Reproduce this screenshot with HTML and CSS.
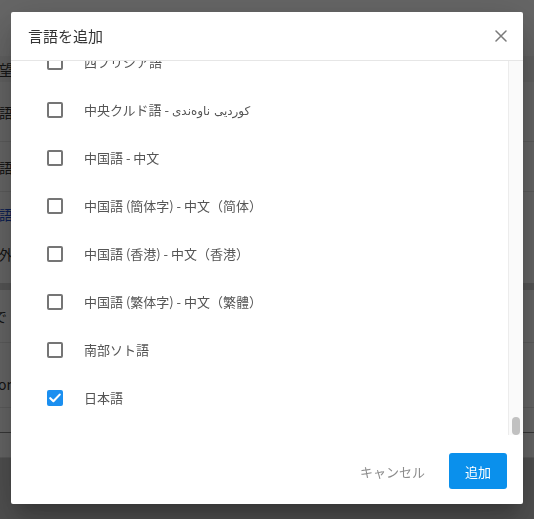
FILE: index.html
```html
<!DOCTYPE html>
<html lang="ja">
<head>
<meta charset="utf-8">
<title>言語を追加</title>
<link rel="stylesheet" href="styles.css">
</head>
<body>
<div class="page">
  <div class="pg-spacer"></div>
  <div class="pg-row pg-r1"><span class="pg-t">望</span></div>
  <div class="pg-row pg-r2 pg-line"><span class="pg-t">語</span></div>
  <div class="pg-row pg-r3 pg-line"><span class="pg-t">語</span></div>
  <div class="pg-row pg-r4"><span class="pg-t pg-link">語</span></div>
  <div class="pg-row pg-r5"><span class="pg-t">外</span></div>
  <div class="pg-gap"></div>
  <div class="pg-band"></div>
  <div class="pg-row pg-r6 pg-line"><span class="pg-t pg-cut">で</span></div>
  <div class="pg-row pg-r7 pg-line"><span class="pg-t pg-om">om</span></div>
  <div class="pg-r8"></div>
  <div class="pg-r9"></div>
  <div class="pg-foot"></div>
</div>

<div class="overlay">
  <div class="dialog">
    <div class="dlg-head">
      <span class="dlg-title">言語を追加</span>
      <svg class="dlg-close" width="12" height="12" viewBox="0 0 12 12"><path d="M1 1 L11 11 M11 1 L1 11" stroke="#7a7a7a" stroke-width="1.5" stroke-linecap="round" fill="none"/></svg>
    </div>
    <div class="dlg-body">
      <div class="list">
        <div class="list-inner">
          <div class="item"><span class="cb"></span><span class="label">西フリジア語</span></div>
          <div class="item"><span class="cb"></span><span class="label">中央クルド語 - <span class="ar">کوردیی ناوەندی</span></span></div>
          <div class="item"><span class="cb"></span><span class="label">中国語 - 中文</span></div>
          <div class="item"><span class="cb"></span><span class="label">中国語 (簡体字) - 中文（简体）</span></div>
          <div class="item"><span class="cb"></span><span class="label">中国語 (香港) - 中文（香港）</span></div>
          <div class="item"><span class="cb"></span><span class="label">中国語 (繁体字) - 中文（繁體）</span></div>
          <div class="item"><span class="cb"></span><span class="label">南部ソト語</span></div>
          <div class="item"><span class="cb cb-on"><svg width="12" height="10" viewBox="0 0 12 10"><path d="M1.3 5.2 L4.4 8.2 L10.7 1.6" stroke="#fff" stroke-width="2.1" fill="none" stroke-linecap="round" stroke-linejoin="round"/></svg></span><span class="label">日本語</span></div>
        </div>
      </div>
      <div class="track"><div class="thumb"></div></div>
    </div>
    <div class="dlg-foot">
      <button class="btn-cancel">キャンセル</button>
      <button class="btn-add">追加</button>
    </div>
  </div>
</div>
</body>
</html>
```

FILE: styles.css
```css
html, body {
  margin: 0;
  padding: 0;
}
body {
  width: 534px;
  height: 519px;
  overflow: hidden;
  font-family: "Noto Sans CJK JP", "DejaVu Sans", sans-serif;
  background: #fff;
}

/* underlying page */
.page {
  width: 534px;
  font-size: 13px;
  color: #333;
}
.pg-spacer { height: 56px; }
.pg-row {
  display: flex;
  align-items: center;
}
.pg-line { border-bottom: 1px solid #e6e6e6; box-sizing: border-box; }
.pg-t { margin-left: -1px; font-size: 14px; line-height: 16px; }
.pg-link { color: #1a4fd0; }
.pg-r1 { height: 26px; background: #f4f4f4; }
.pg-r2 { height: 60px; }
.pg-r3 { height: 50px; }
.pg-r4 { height: 44px; }
.pg-r5 { height: 36px; }
.pg-gap { height: 11px; }
.pg-band { height: 7px; background: #d6d6d6; }
.pg-r6 { height: 53px; }
.pg-cut { margin-left: -7px; }
.pg-r7 { height: 65px; align-items: flex-start; padding-top: 33px; box-sizing: border-box; }
.pg-om { margin-left: -2px; font-size: 14px; }
.pg-r8 { height: 24px; border-bottom: 1px solid #8a8a8a; }
.pg-r9 { height: 24px; border-bottom: 1px solid #e0e0e0; }
.pg-foot { height: 80px; background: #c8c8c8; }

/* overlay + dialog */
.overlay {
  position: fixed;
  inset: 0;
  background: rgba(0, 0, 0, 0.6);
  padding: 12px 0 0 11px;
  box-sizing: border-box;
}
.dialog {
  width: 512px;
  height: 492px;
  background: #fff;
  border-radius: 2px;
  display: flex;
  flex-direction: column;
  box-shadow: 0 11px 15px -7px rgba(0,0,0,.2), 0 24px 38px 3px rgba(0,0,0,.14), 0 9px 46px 8px rgba(0,0,0,.12);
}
.dlg-head {
  height: 49px;
  box-sizing: border-box;
  border-bottom: 1px solid #e6e6e6;
  display: flex;
  align-items: center;
  justify-content: space-between;
  padding: 0 16px 1px 17px;
  flex: none;
}
.dlg-title {
  font-size: 15px;
  color: #333;
  line-height: 20px;
}
.dlg-close { display: block; margin-top: 1px; }

.dlg-body {
  height: 374px;
  display: flex;
  flex: none;
}
.list {
  flex: 1;
  overflow: hidden;
}
.list-inner {
  margin-top: -23px;
}
.item {
  height: 48px;
  display: flex;
  align-items: center;
  padding-left: 36px;
}
.cb {
  width: 16px;
  height: 16px;
  box-sizing: border-box;
  border: 2px solid #757575;
  border-radius: 2px;
  flex: none;
  display: flex;
  align-items: center;
  justify-content: center;
}
.cb-on {
  background: #1b8ff0;
  border-color: #1b8ff0;
}
.cb-on svg { display: block; }
.label {
  margin-left: 21px;
  font-size: 13px;
  color: #555;
  line-height: 18px;
  white-space: nowrap;
}
.ar {
  font-family: "DejaVu Sans", sans-serif;
  font-size: 12px;
}

.track {
  width: 15px;
  box-sizing: border-box;
  border-left: 1px solid #ececec;
  background: #fafafa;
  display: flex;
  flex-direction: column;
  justify-content: flex-end;
  align-items: center;
  flex: none;
}
.thumb {
  width: 8px;
  height: 18px;
  border-radius: 4px;
  background: #c1c1c1;
  margin-right: 1px;
}

.dlg-foot {
  flex: 1;
  display: flex;
  justify-content: flex-end;
  align-items: flex-start;
  padding: 18px 16px 0 0;
  gap: 8px;
}
.btn-cancel, .btn-add {
  font-family: "Noto Sans CJK JP", sans-serif;
  font-size: 13px;
  height: 36px;
  border: none;
  border-radius: 3px;
  cursor: pointer;
}
.btn-cancel {
  background: transparent;
  color: #8c8c8c;
  padding: 0 16px;
}
.btn-add {
  width: 58px;
  background: #0a90ec;
  color: #fff;
  padding: 0;
}
```
